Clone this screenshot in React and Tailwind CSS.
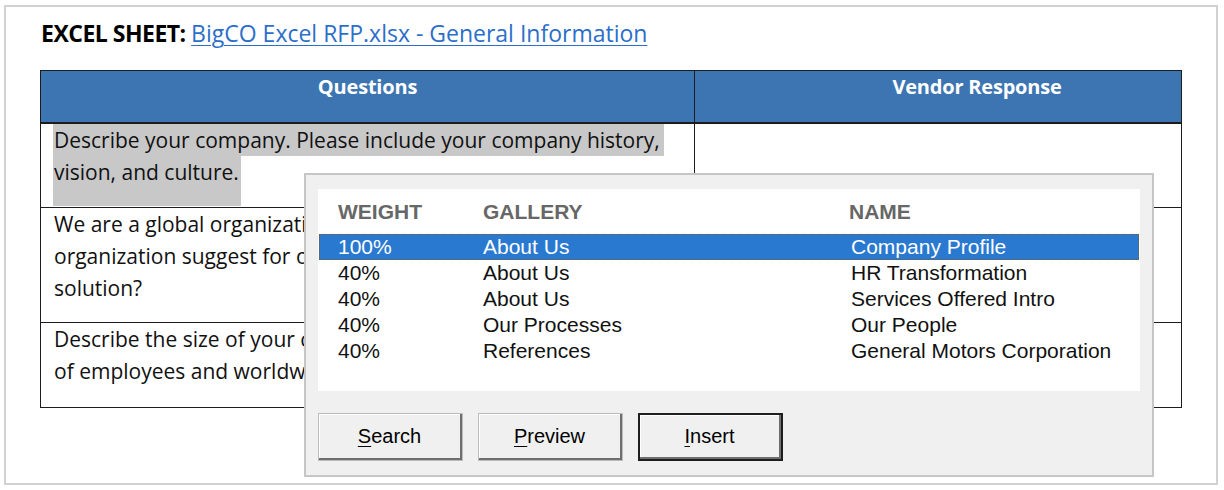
import React from "react";

const rows = [
  { weight: "100%", gallery: "About Us", name: "Company Profile", selected: true },
  { weight: "40%", gallery: "About Us", name: "HR Transformation" },
  { weight: "40%", gallery: "About Us", name: "Services Offered Intro" },
  { weight: "40%", gallery: "Our Processes", name: "Our People" },
  { weight: "40%", gallery: "References", name: "General Motors Corporation" },
];

const calibri = "font-['Open_Sans',_'Noto_Sans',_sans-serif]";
const tahoma = "font-['Liberation_Sans',_Arial,_sans-serif]";

function WinButton({ label, hot, isDefault }) {
  return (
    <button
      className={`w-[145px] h-[48px] ${isDefault ? "border-2 border-[#1e1e1e]" : "border border-[#bcbcbc]"} bg-[#f0f0f0] text-[20px] text-black ${tahoma}`}
    >
      <span className="flex items-center justify-center w-full h-full border-r-2 border-b-2 border-[#6e6e6e] shadow-[inset_1px_1px_0_#ffffff]">
        <span className="underline decoration-1 underline-offset-[3px]">{hot}</span>
        {label.slice(1)}
      </span>
    </button>
  );
}

export default function App() {
  return (
    <div className="relative w-[1224px] h-[490px] bg-white overflow-hidden">
      {/* page frame */}
      <div className={`ml-[4px] mt-[5px] w-[1214px] h-[480px] border-2 border-[#d2d2d2] pt-[11px] pl-[34px] ${calibri}`}>
        <div className="pl-[1px] text-[23px] leading-[31px] text-black">
          <span className="font-bold tracking-[-0.5px]">EXCEL SHEET: </span>
          <a href="#" className="text-[#2c6fca] underline decoration-1 underline-offset-[3px]">
            BigCO Excel RFP.xlsx - General Information
          </a>
        </div>

        <table className="mt-[21px] border-collapse text-[21px] leading-[32px] text-[#111]">
          <colgroup>
            <col className="w-[654px]" />
            <col className="w-[487px]" />
          </colgroup>
          <thead>
            <tr className="h-[52px] bg-[#3c75b1] text-[20px]">
              <th className="align-top border border-[#1c1c1c] border-b-2 text-white font-bold tracking-[-0.2px]">Questions</th>
              <th className="align-top border border-[#1c1c1c] border-b-2 text-white font-bold pl-[78px] tracking-[-0.2px]">Vendor Response</th>
            </tr>
          </thead>
          <tbody>
            <tr className="h-[85px]">
              <td className="align-top border border-[#1c1c1c] pl-[12px]">
                <span className="block w-fit bg-[#c8c8c8] pl-[1px] pr-[4px]">
                  Describe your company. Please include your company history,
                </span>
                <span className="block w-fit bg-[#c8c8c8] pl-[1px] pr-[2px] pb-[18px]">vision, and culture.</span>
              </td>
              <td className="border border-[#1c1c1c]"></td>
            </tr>
            <tr className="h-[115px]">
              <td className="align-top border border-[#1c1c1c] pl-[13px] whitespace-nowrap">
                <span className="block">We are a global organization. What structure would</span>
                <span className="block">organization suggest for our global rollout of</span>
                <span className="block">solution?</span>
              </td>
              <td className="border border-[#1c1c1c]"></td>
            </tr>
            <tr className="h-[85px]">
              <td className="align-top border border-[#1c1c1c] pl-[13px] whitespace-nowrap">
                <span className="block">Describe the size of your company, including the</span>
                <span className="block">of employees and worldwide locations.</span>
              </td>
              <td className="border border-[#1c1c1c]"></td>
            </tr>
          </tbody>
        </table>
      </div>

      {/* search dialog */}
      <div className={`absolute left-[304px] top-[173px] w-[850px] h-[304px] bg-[#f0f0f0] border-2 border-[#c6c6c6] pl-[12px] pt-[14px] ${tahoma}`}>
        <div className="w-[822px] h-[202px] bg-white">
          <div className="flex items-center h-[45px] pl-[20px] text-[21px] font-bold text-[#676767]">
            <span className="w-[145px]">WEIGHT</span>
            <span className="w-[366px]">GALLERY</span>
            <span>NAME</span>
          </div>
          {rows.map((r) => (
            <div
              key={r.name}
              className={`flex items-center h-[26px] mx-[1px] pl-[18px] text-[21px] border ${r.selected ? "bg-[#2a79d1] text-white border-dotted border-[#7a5a2c]" : "border-transparent text-[#111]"}`}
            >
              <span className="w-[145px]">{r.weight}</span>
              <span className="w-[368px]">{r.gallery}</span>
              <span>{r.name}</span>
            </div>
          ))}
        </div>
        <div className="flex gap-[15px] mt-[22px]">
          <WinButton label="Search" hot="S" />
          <WinButton label="Preview" hot="P" />
          <WinButton label="Insert" hot="I" isDefault />
        </div>
      </div>
    </div>
  );
}
